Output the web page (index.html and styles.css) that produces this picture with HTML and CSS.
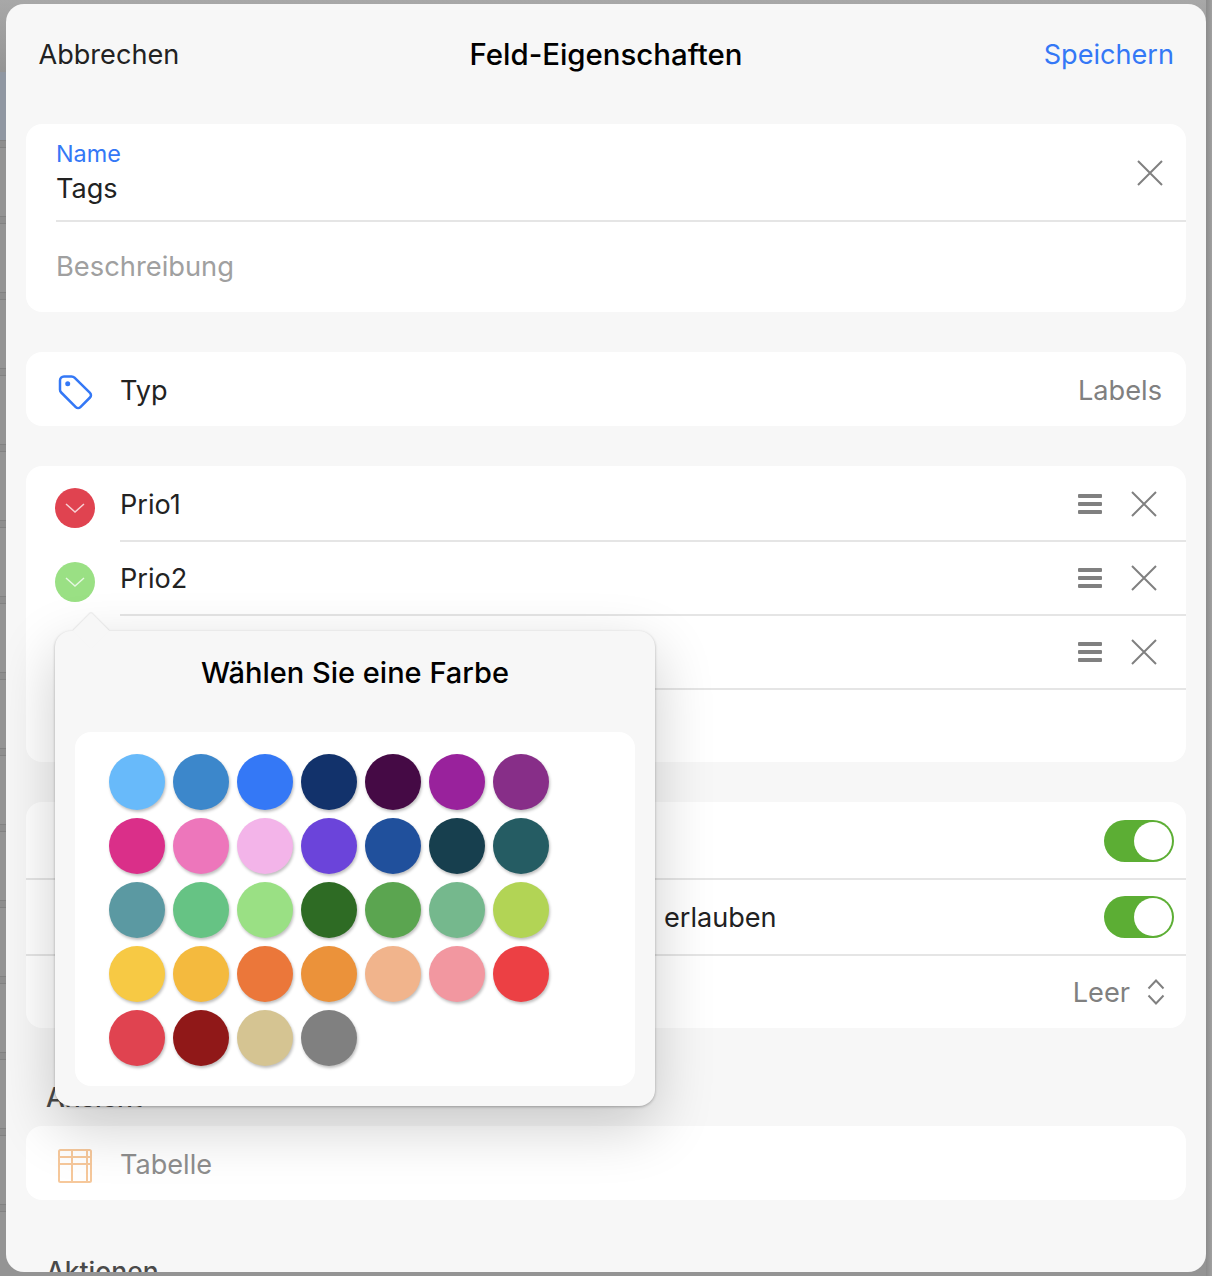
FILE: index.html
```html
<!DOCTYPE html>
<html lang="de">
<head>
<meta charset="utf-8">
<title>Feld-Eigenschaften</title>
<link rel="stylesheet" href="styles.css">
</head>
<body>
<div class="backdrop">
  <main class="modal">
    <header class="topbar">
      <span class="cancel">Abbrechen</span>
      <h1 class="title">Feld-Eigenschaften</h1>
      <span class="save">Speichern</span>
    </header>

    <section class="card card-name">
      <div class="name-row">
        <div class="name-fields">
          <span class="float-label">Name</span>
          <span class="name-value">Tags</span>
        </div>
        <svg class="x x-name" viewBox="0 0 26 26"><path d="M1 1 25 25M25 1 1 25"/></svg>
      </div>
      <div class="desc-row">Beschreibung</div>
    </section>

    <section class="card row type-row">
      <svg class="tag" viewBox="0 0 36 36"><path d="M3 6.500C3 4.200 4.700 2.500 7 2.500h7.500c1.200 0 2.200.4 3 1.200L33 18.900c1.300 1.300 1.300 3.300 0 4.600l-9.600 9.600c-1.300 1.300-3.300 1.300-4.600 0L4.200 18.500C3.400 17.700 3 16.800 3 15.700z"/><circle cx="10.700" cy="9.700" r="2.500"/></svg>
      <span class="row-label">Typ</span>
      <span class="value">Labels</span>
    </section>

    <section class="card options">
      <div class="option">
        <span class="swatch red"><svg viewBox="0 0 20 10"><path d="M1 1 10 9 19 1"/></svg></span>
        <div class="option-body">
          <span class="row-label">Prio1</span>
          <span class="handle"><i></i><i></i><i></i></span>
          <svg class="x x-opt" viewBox="0 0 26 26"><path d="M1 1 25 25M25 1 1 25"/></svg>
        </div>
      </div>
      <div class="option">
        <span class="swatch green"><svg viewBox="0 0 20 10"><path d="M1 1 10 9 19 1"/></svg></span>
        <div class="option-body">
          <span class="row-label">Prio2</span>
          <span class="handle"><i></i><i></i><i></i></span>
          <svg class="x x-opt" viewBox="0 0 26 26"><path d="M1 1 25 25M25 1 1 25"/></svg>
        </div>
      </div>
      <div class="option">
        <span class="swatch hidden"></span>
        <div class="option-body">
          <span class="row-label"></span>
          <span class="handle"><i></i><i></i><i></i></span>
          <svg class="x x-opt" viewBox="0 0 26 26"><path d="M1 1 25 25M25 1 1 25"/></svg>
        </div>
      </div>
    </section>

    <section class="card settings">
      <div class="setting">
        <span class="toggle"><b></b></span>
      </div>
      <div class="setting">
        <span class="row-label allow">erlauben</span>
        <span class="toggle"><b></b></span>
      </div>
      <div class="setting last">
        <span class="value">Leer</span>
        <svg class="updown" viewBox="0 0 18 28"><path d="M1.500 10.500 9 2.500l7.500 8M1.500 17.500 9 25.500l7.500-8"/></svg>
      </div>
    </section>

    <h2 class="section-label first">Ansicht</h2>
    <section class="card row table-row">
      <svg class="table" viewBox="0 0 34 34"><path d="M2.500 1h29A1.500 1.500 0 0 1 33 2.500v29a1.500 1.500 0 0 1-1.500 1.500h-29A1.500 1.500 0 0 1 1 31.500v-29A1.500 1.500 0 0 1 2.500 1zM1 8h32M1 15h32M14 1v32M29 1v32"/></svg>
      <span class="row-label muted">Tabelle</span>
    </section>

    <h2 class="section-label">Aktionen</h2>

    <aside class="popover">
      <span class="arrow"></span>
      <h2 class="pop-title">Wählen Sie eine Farbe</h2>
      <div class="palette">
        <i style="background:#68bafa"></i><i style="background:#3c87cb"></i><i style="background:#3478f6"></i><i style="background:#12326b"></i><i style="background:#450a45"></i><i style="background:#99229c"></i><i style="background:#872e88"></i>
        <i style="background:#da2f89"></i><i style="background:#ed76bb"></i><i style="background:#f3b4e9"></i><i style="background:#6b44da"></i><i style="background:#20509c"></i><i style="background:#173f4e"></i><i style="background:#255c63"></i>
        <i style="background:#5b99a2"></i><i style="background:#66c384"></i><i style="background:#9ae084"></i><i style="background:#2e6b24"></i><i style="background:#5ba550"></i><i style="background:#75b88d"></i><i style="background:#b2d455"></i>
        <i style="background:#f7c944"></i><i style="background:#f4ba3e"></i><i style="background:#eb773a"></i><i style="background:#eb923a"></i><i style="background:#f1b48c"></i><i style="background:#f297a0"></i><i style="background:#ec4044"></i>
        <i style="background:#e04350"></i><i style="background:#901818"></i><i style="background:#d5c492"></i><i style="background:#808080"></i>
      </div>
    </aside>
  </main>
</div>
</body>
</html>
```
FILE: styles.css
```css
* { box-sizing: border-box; }
html, body { margin: 0; height: 1276px; overflow: hidden; }
body { font-family: Inter, "Liberation Sans", sans-serif; color: #222; }
.backdrop {
  height: 1276px;
  padding: 4px 6px;
  background-color: #949494;
  background-image:
    repeating-linear-gradient(to bottom, #828282 0 1px, #8e8e8e 1px 7px, #828282 7px 8px, transparent 8px 76px),
    linear-gradient(#9097a2, #9097a2),
    linear-gradient(to right, #8c8c8c, #a0a0a0),
    linear-gradient(to bottom, #a8a8a8, #949494 72px);
  background-repeat: no-repeat;
  background-size: 6px 1136px, 6px 68px, 6px 100%, 100% 100%;
  background-position: 0 140px, 0 72px, right 0 top 0, 0 0;
}
.modal { position: relative; height: 1268px; overflow: hidden; padding: 0 20px; background: #f7f7f7; border-radius: 18px; }
.topbar { display: flex; justify-content: space-between; align-items: center; height: 120px; padding: 0 12px 20px 12.500px; font-size: 27.100px; }
.topbar .title { position: absolute; left: 0; right: 0; margin: 0; text-align: center; font-size: 29.400px; font-weight: 500; color: #000; }
.save { color: #3478f6; position: relative; }
.card { background: #fff; border-radius: 16px; margin: 0 0 40px; }
.card-name { height: 188px; }
.name-row { display: flex; align-items: center; justify-content: space-between; height: 98px; margin-left: 30px; padding: 0 23px 0 0; border-bottom: 2px solid #e5e5e5; }
.name-fields { display: flex; flex-direction: column; align-self: flex-start; padding-top: 16px; }
.float-label { font-size: 23.400px; line-height: 28px; color: #3478f6; }
.name-value { font-size: 27.100px; line-height: 40px; margin-top: 1px; }
.desc-row { margin-left: 30px; font-size: 27.300px; line-height: 90px; color: #a0a0a0; }
.x { display: block; fill: none; stroke: #808080; stroke-width: 2; }
.x-name { width: 26px; height: 26px; margin-top: 2px; }
.x-opt { width: 26px; height: 26px; margin-left: 29px; }
.row { display: flex; align-items: center; height: 74px; }
.type-row { padding: 0 24px 0 31px; }
.type-row .value { padding-top: 2px; }
.tag { width: 36px; height: 36px; margin-top: 6px; margin-right: 27px; fill: none; stroke: #3478f6; stroke-width: 2.500; }
.tag circle { fill: #3478f6; stroke: none; }
.row-label { font-size: 27.100px; flex: 1; padding-top: 2px; }
.option .row-label { padding-top: 0; }
.value { font-size: 27.200px; color: #808080; }
.options { height: 296px; padding-top: 2px; }
.option { display: flex; align-items: center; height: 74px; padding-left: 29px; }
.swatch { flex: none; display: flex; align-items: center; justify-content: center; width: 40px; height: 40px; margin: 6px 25px 0 0; border-radius: 50%; }
.swatch svg { width: 20px; height: 10px; fill: none; stroke: rgba(255,255,255,.75); stroke-width: 1.500; }
.red { background: #e04350; }
.green { background: #9ae084; }
.hidden { background: transparent; }
.option-body { flex: 1; display: flex; align-items: center; height: 74px; padding-right: 29px; border-bottom: 2px solid #e5e5e5; }
.handle { display: flex; flex-direction: column; gap: 4px; width: 24px; }
.handle i { display: block; height: 4px; background: #808080; border-radius: 1px; }
.settings { height: 226px; padding-top: 2px; }
.setting { display: flex; align-items: center; justify-content: flex-end; height: 76px; padding: 0 12px 0 638px; border-bottom: 2px solid #e5e5e5; }
.setting.last { border: 0; height: 72px; padding-right: 21px; }
.allow { display: block; padding-top: 0; }
.toggle { flex: none; display: block; width: 70px; height: 42px; padding: 2px 2px 2px 30px; border-radius: 21px; background: #5cae34; }
.toggle b { display: block; width: 38px; height: 38px; border-radius: 50%; background: #fff; }
.updown { width: 18px; height: 28px; margin-left: 17px; fill: none; stroke: #808080; stroke-width: 2; }
.section-label { margin: 0 0 12px 20px; height: 36px; font-size: 26.500px; line-height: 36px; font-weight: 500; color: #4a4a4a; }
.section-label.first { margin-top: 51px; margin-bottom: 11px; }
.table-row { padding-left: 32px; margin-bottom: 53px; }
.table { width: 34px; height: 34px; margin-top: 6px; margin-right: 28px; fill: none; stroke: #f6c89b; stroke-width: 2; }
.muted { color: #8e8e8e; }
.popover { position: absolute; left: 49px; top: 627px; width: 600px; height: 475px; padding: 0 20px; background: #f7f7f7; border-radius: 16px; box-shadow: 0 1px 3px rgba(0,0,0,.28), 0 20px 60px rgba(0,0,0,.2); }
.arrow { position: absolute; left: 23px; top: -13px; width: 26px; height: 26px; background: #f7f7f7; transform: rotate(45deg); box-shadow: -1px -1px 1px rgba(0,0,0,.07); border-radius: 2px 0 0 0; }
.pop-title { position: relative; margin: 0; height: 101px; padding-top: 24px; font-size: 29px; line-height: 36px; font-weight: 500; text-align: center; color: #000; }
.palette { display: grid; grid-template-columns: repeat(7, 56px); grid-auto-rows: 56px; gap: 8px; align-content: start; height: 354px; padding: 22px 0 0 34px; background: #fff; border-radius: 16px; }
.palette i { display: block; border-radius: 50%; box-shadow: 1px 2px 3px rgba(0,0,0,.25); }
```
